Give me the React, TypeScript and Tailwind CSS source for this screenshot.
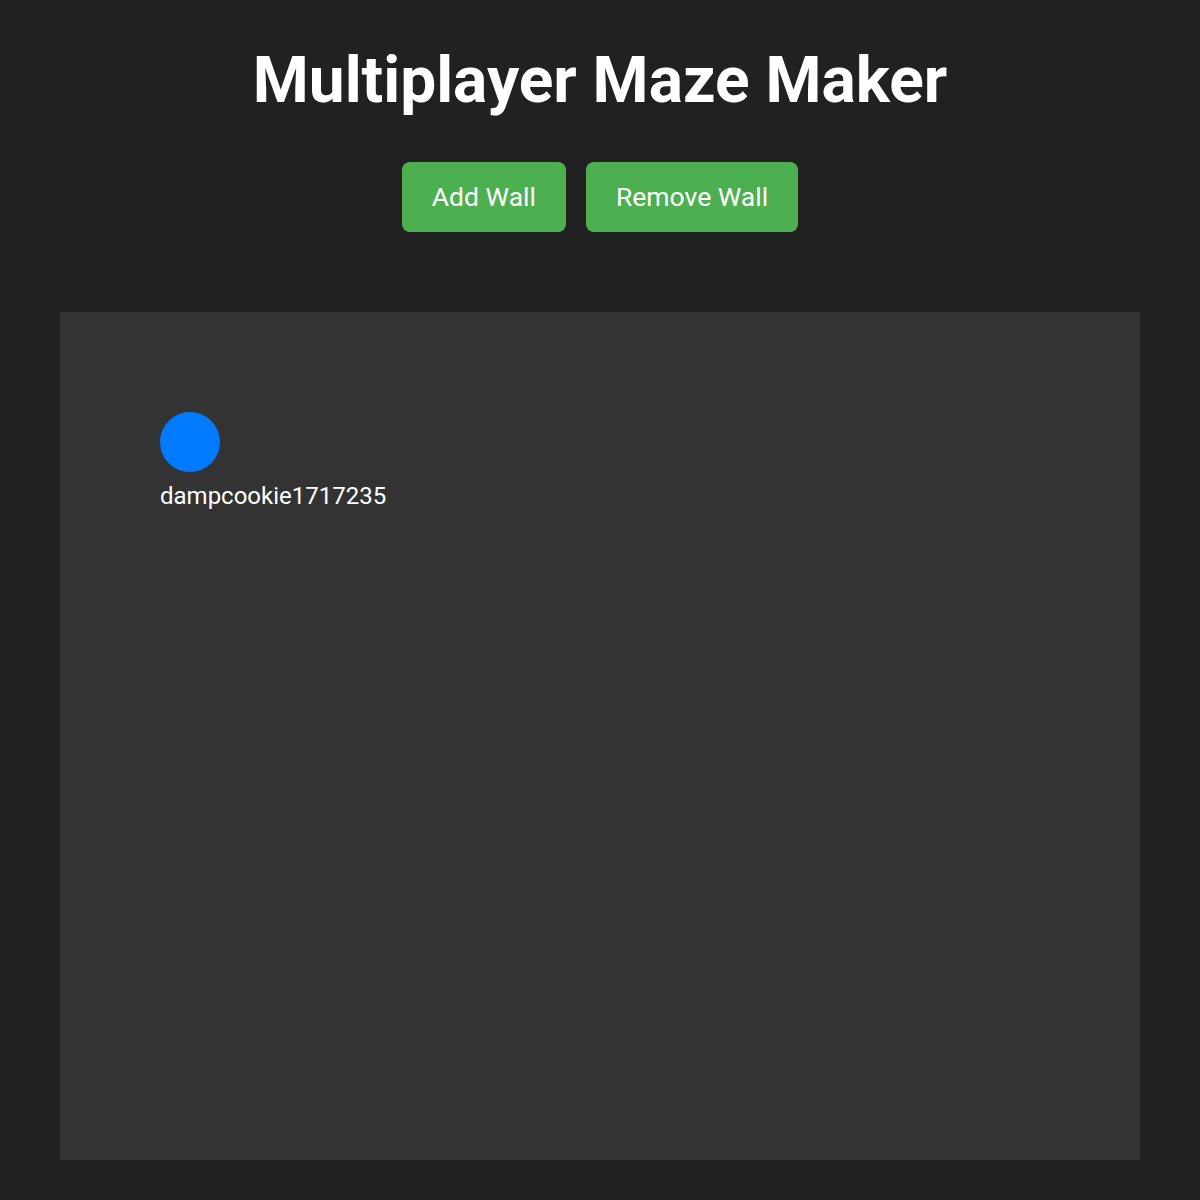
export default function App() {
  return (
    <div className="min-h-[1200px] bg-[#212121] pb-[40px] text-white [font-family:Roboto,'Liberation_Sans',sans-serif]">
      <h1 className="pt-[43px] text-center text-[64px] font-bold leading-[75px]">Multiplayer Maze Maker</h1>
      <div className="mt-[44px] flex justify-center gap-[20px]">
        <button className="h-[70px] rounded-lg bg-[#4caf50] px-[30px] text-[26.5px] text-white">Add Wall</button>
        <button className="h-[70px] rounded-lg bg-[#4caf50] px-[30px] text-[26.5px] text-white">Remove Wall</button>
      </div>
      <div className="relative mx-[60px] mt-[80px] h-[848px] bg-[#333333]">
        <div className="absolute left-[100px] top-[100px] flex flex-col items-start">
          <span className="h-[60px] w-[60px] rounded-full bg-[#007bff]" />
          <span className="mt-[10px] text-[24px] leading-[28px]">dampcookie1717235</span>
        </div>
      </div>
    </div>
  );
}
